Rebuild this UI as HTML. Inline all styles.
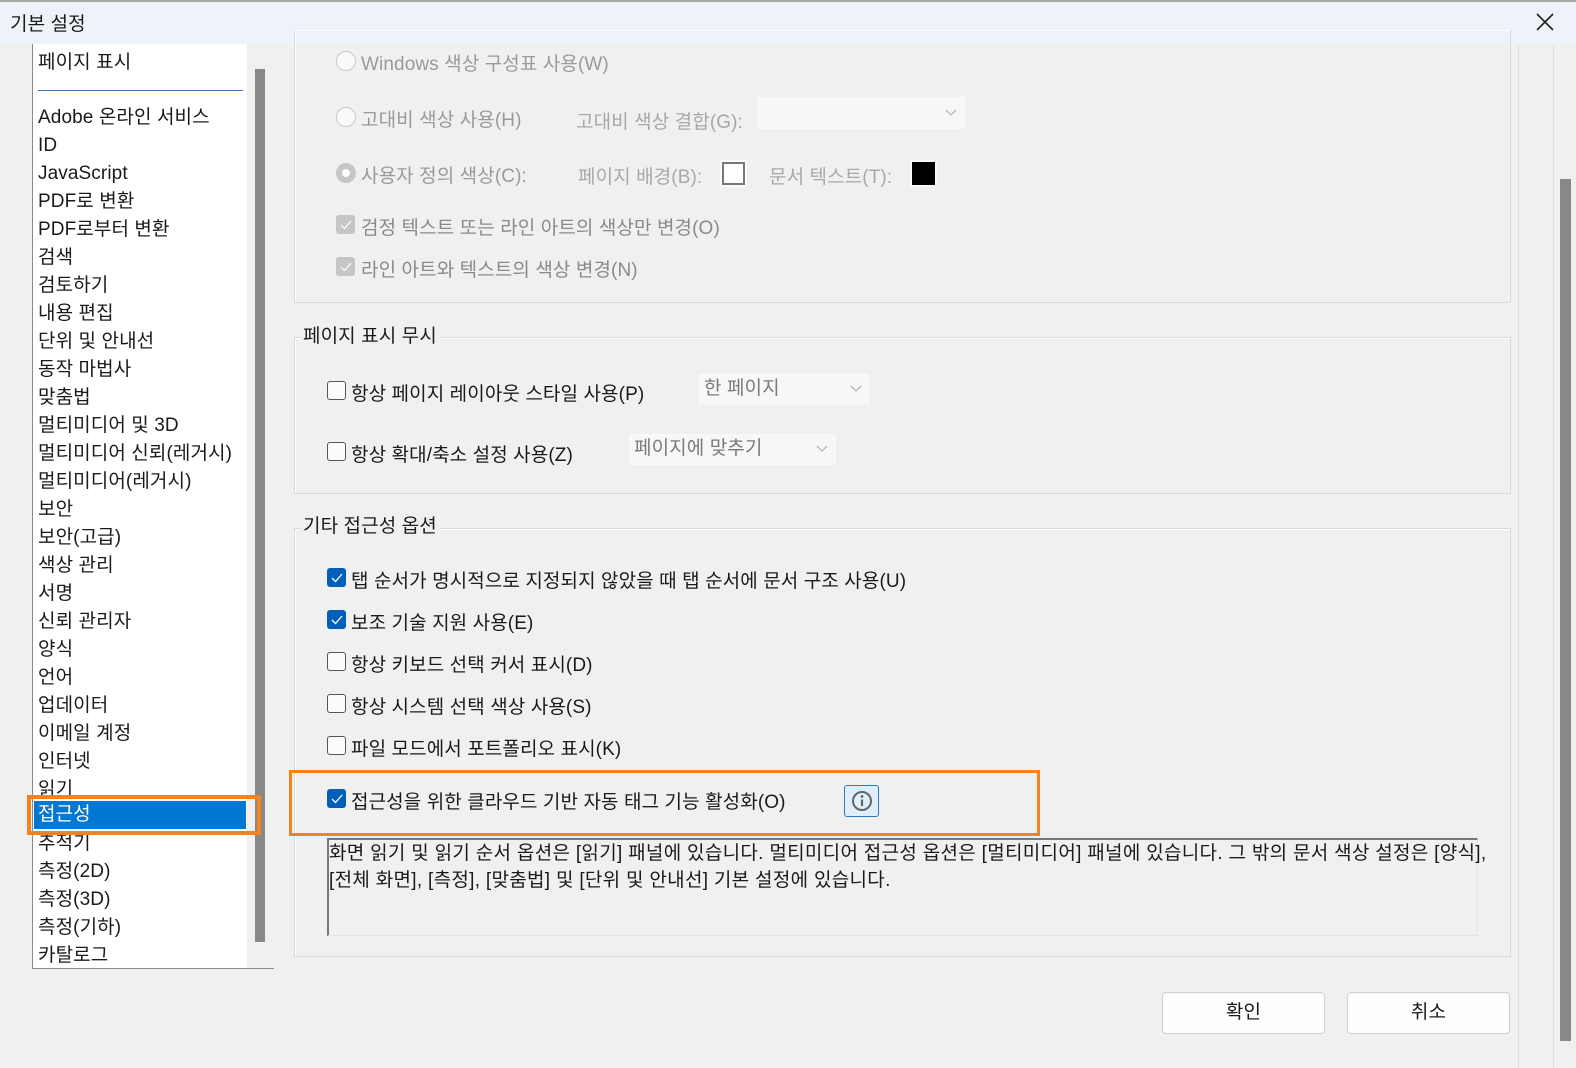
<!DOCTYPE html>
<html><head><meta charset="utf-8"><style>
*{box-sizing:border-box;margin:0;padding:0}
body{width:1576px;height:1068px;background:#f0f0f0;position:relative;overflow:hidden;font-family:"Liberation Sans","Noto Sans CJK KR",sans-serif;font-size:19px;letter-spacing:0.1px;color:#1a1a1a}
.a{position:absolute;white-space:nowrap}
.title{left:0;top:0;width:1576px;height:44px;background:#eef2f9;border-top:2px solid #a8a8a8}
.list{left:32px;top:44px;width:242px;height:925px;background:#fff;border:1px solid #8a8a8a;border-top:none}
.li{position:absolute;left:5px;line-height:28px}
.grp{border:1px solid #d9d9d9;box-shadow:inset 1px 1px 0 #fff}
.gl{background:#f0f0f0;padding:0 2px;line-height:22px}
.cb{width:19px;height:19px;border:1px solid #555;border-radius:3px;background:#fbfbfb}
.cbk{width:19px;height:19px;border-radius:3px;background:#005fb8}
.cbg{width:19px;height:19px;border-radius:3px;background:#c6c6c6}
.rd{width:20px;height:20px;border:1px solid #c9c9c9;border-radius:50%;background:#fafafa}
.dis{color:#9a9a9a}
.dd{background:#f7f7f7;border:1px solid #f9f9f9;color:#7a7a7a;padding-left:4px;line-height:28px}
.btn{background:#fdfdfd;border:1px solid #d0d0d0;border-radius:4px;text-align:center;line-height:40px}
</style></head><body>
<div class="a title"></div>
<div class="a" style="left:10px;top:9px;font-size:19px">기본 설정</div>
<svg class="a" style="left:1536px;top:13px" width="18" height="18"><path d="M1 1L17 17M17 1L1 17" stroke="#222" stroke-width="1.6"/></svg>

<div class="a list">
<div class="li" style="top:5px">페이지 표시</div>
<div class="a" style="left:5px;top:46px;width:205px;height:1px;background:#3b7db8"></div>
<div class="li" style="top:60px">Adobe 온라인 서비스</div>
<div class="li" style="top:88px">ID</div>
<div class="li" style="top:116px">JavaScript</div>
<div class="li" style="top:144px">PDF로 변환</div>
<div class="li" style="top:172px">PDF로부터 변환</div>
<div class="li" style="top:200px">검색</div>
<div class="li" style="top:228px">검토하기</div>
<div class="li" style="top:256px">내용 편집</div>
<div class="li" style="top:284px">단위 및 안내선</div>
<div class="li" style="top:312px">동작 마법사</div>
<div class="li" style="top:340px">맞춤법</div>
<div class="li" style="top:368px">멀티미디어 및 3D</div>
<div class="li" style="top:396px">멀티미디어 신뢰(레거시)</div>
<div class="li" style="top:424px">멀티미디어(레거시)</div>
<div class="li" style="top:452px">보안</div>
<div class="li" style="top:480px">보안(고급)</div>
<div class="li" style="top:508px">색상 관리</div>
<div class="li" style="top:536px">서명</div>
<div class="li" style="top:564px">신뢰 관리자</div>
<div class="li" style="top:592px">양식</div>
<div class="li" style="top:620px">언어</div>
<div class="li" style="top:648px">업데이터</div>
<div class="li" style="top:676px">이메일 계정</div>
<div class="li" style="top:704px">인터넷</div>
<div class="li" style="top:732px">읽기</div>
<div class="a" style="left:1px;top:757px;width:212px;height:28px;background:#0078d4"></div>
<div class="li" style="top:757px;color:#fff">접근성</div>
<div class="li" style="top:786px">추적기</div>
<div class="li" style="top:814px">측정(2D)</div>
<div class="li" style="top:842px">측정(3D)</div>
<div class="li" style="top:870px">측정(기하)</div>
<div class="li" style="top:898px">카탈로그</div>
<div class="a" style="left:214px;top:0;width:27px;height:924px;background:#f0f0f0"></div>
<div class="a" style="left:222px;top:25px;width:10px;height:873px;background:#888"></div>
</div>
<div class="a" style="left:27px;top:795px;width:234px;height:40px;border:4px solid #f58220"></div>

<div class="a" style="left:1518px;top:44px;width:1px;height:1024px;background:#dcdcdc"></div>
<div class="a" style="left:1553px;top:44px;width:1px;height:1024px;background:#dcdcdc"></div>
<div class="a" style="left:1560px;top:179px;width:11px;height:862px;background:#888"></div>

<div class="a grp" style="left:294px;top:30px;width:1217px;height:273px;border-top:none"></div>
<div class="a rd" style="left:336px;top:51px"></div>
<div class="a dis" style="left:361px;top:49px">Windows 색상 구성표 사용(W)</div>
<div class="a rd" style="left:336px;top:107px"></div>
<div class="a dis" style="left:361px;top:105px">고대비 색상 사용(H)</div>
<div class="a dis" style="left:576px;top:107px;color:#a8a8a8">고대비 색상 결합(G):</div>
<div class="a" style="left:757px;top:97px;width:208px;height:32px;background:#f7f7f7"></div>
<svg class="a" style="left:945px;top:109px" width="12" height="8"><path d="M1 1L6 6L11 1" stroke="#aaa" fill="none"/></svg>
<div class="a rd" style="left:336px;top:163px;border:6px solid #c6c6c6;background:#fff"></div>
<div class="a dis" style="left:361px;top:161px">사용자 정의 색상(C):</div>
<div class="a dis" style="left:578px;top:162px;color:#a8a8a8">페이지 배경(B):</div>
<div class="a" style="left:722px;top:162px;width:23px;height:23px;border:2px solid #777;box-shadow:0 0 0 2px #fafafa;background:#fff"></div>
<div class="a dis" style="left:769px;top:162px;color:#a8a8a8">문서 텍스트(T):</div>
<div class="a" style="left:912px;top:162px;width:23px;height:23px;background:#000;box-shadow:0 0 0 2px #fafafa"></div>
<div class="a cbg" style="left:336px;top:215px"></div>
<svg class="a" style="left:339px;top:219px" width="14" height="12"><path d="M2 6L5.5 9.5L12 2" stroke="#fff" fill="none" stroke-width="1.2"/></svg>
<div class="a dis" style="left:361px;top:213px;color:#8a8a8a">검정 텍스트 또는 라인 아트의 색상만 변경(O)</div>
<div class="a cbg" style="left:336px;top:257px"></div>
<svg class="a" style="left:339px;top:261px" width="14" height="12"><path d="M2 6L5.5 9.5L12 2" stroke="#fff" fill="none" stroke-width="1.2"/></svg>
<div class="a dis" style="left:361px;top:255px;color:#8a8a8a">라인 아트와 텍스트의 색상 변경(N)</div>

<div class="a grp" style="left:294px;top:337px;width:1217px;height:157px"></div>
<div class="a gl" style="left:301px;top:326px">페이지 표시 무시</div>
<div class="a cb" style="left:327px;top:381px"></div>
<div class="a" style="left:351px;top:379px">항상 페이지 레이아웃 스타일 사용(P)</div>
<div class="a dd" style="left:699px;top:374px;width:170px;height:31px">한 페이지</div>
<svg class="a" style="left:850px;top:385px" width="12" height="8"><path d="M1 1L6 6L11 1" stroke="#aaa" fill="none"/></svg>
<div class="a cb" style="left:327px;top:442px"></div>
<div class="a" style="left:351px;top:440px">항상 확대/축소 설정 사용(Z)</div>
<div class="a dd" style="left:629px;top:434px;width:207px;height:31px">페이지에 맞추기</div>
<svg class="a" style="left:816px;top:445px" width="12" height="8"><path d="M1 1L6 6L11 1" stroke="#aaa" fill="none"/></svg>

<div class="a grp" style="left:294px;top:528px;width:1217px;height:429px"></div>
<div class="a gl" style="left:301px;top:516px">기타 접근성 옵션</div>
<div class="a cbk" style="left:327px;top:568px"></div>
<svg class="a" style="left:330px;top:572px" width="14" height="12"><path d="M2 6L5.5 9.5L12 2" stroke="#fff" fill="none" stroke-width="1.3"/></svg>
<div class="a" style="left:351px;top:566px">탭 순서가 명시적으로 지정되지 않았을 때 탭 순서에 문서 구조 사용(U)</div>
<div class="a cbk" style="left:327px;top:610px"></div>
<svg class="a" style="left:330px;top:614px" width="14" height="12"><path d="M2 6L5.5 9.5L12 2" stroke="#fff" fill="none" stroke-width="1.3"/></svg>
<div class="a" style="left:351px;top:608px">보조 기술 지원 사용(E)</div>
<div class="a cb" style="left:327px;top:652px"></div>
<div class="a" style="left:351px;top:650px">항상 키보드 선택 커서 표시(D)</div>
<div class="a cb" style="left:327px;top:694px"></div>
<div class="a" style="left:351px;top:692px">항상 시스템 선택 색상 사용(S)</div>
<div class="a cb" style="left:327px;top:736px"></div>
<div class="a" style="left:351px;top:734px">파일 모드에서 포트폴리오 표시(K)</div>
<div class="a" style="left:289px;top:770px;width:751px;height:66px;border:3px solid #f58220"></div>
<div class="a cbk" style="left:327px;top:789px"></div>
<svg class="a" style="left:330px;top:793px" width="14" height="12"><path d="M2 6L5.5 9.5L12 2" stroke="#fff" fill="none" stroke-width="1.3"/></svg>
<div class="a" style="left:351px;top:787px">접근성을 위한 클라우드 기반 자동 태그 기능 활성화(O)</div>
<div class="a" style="left:844px;top:785px;width:35px;height:32px;border:1px solid #2b79c2;border-radius:3px;background:#dfeefb"></div>
<svg class="a" style="left:850px;top:789px" width="24" height="24"><circle cx="12" cy="12" r="9" stroke="#666" stroke-width="2" fill="none"/><circle cx="12" cy="7.5" r="1.4" fill="#666"/><path d="M12 10.5V17" stroke="#666" stroke-width="2.2"/></svg>
<div class="a" style="left:327px;top:838px;width:1151px;height:98px;border-top:2px solid #777;border-left:2px solid #777;border-right:1px solid #e4e4e4;border-bottom:1px solid #e4e4e4"></div>
<div class="a" style="left:329px;top:840px;line-height:27px;white-space:nowrap;letter-spacing:0.3px">화면 읽기 및 읽기 순서 옵션은 [읽기] 패널에 있습니다. 멀티미디어 접근성 옵션은 [멀티미디어] 패널에 있습니다. 그 밖의 문서 색상 설정은 [양식],<br>[전체 화면], [측정], [맞춤법] 및 [단위 및 안내선] 기본 설정에 있습니다.</div>

<div class="a btn" style="left:1162px;top:992px;width:163px;height:42px">확인</div>
<div class="a btn" style="left:1347px;top:992px;width:163px;height:42px">취소</div>
</body></html>
